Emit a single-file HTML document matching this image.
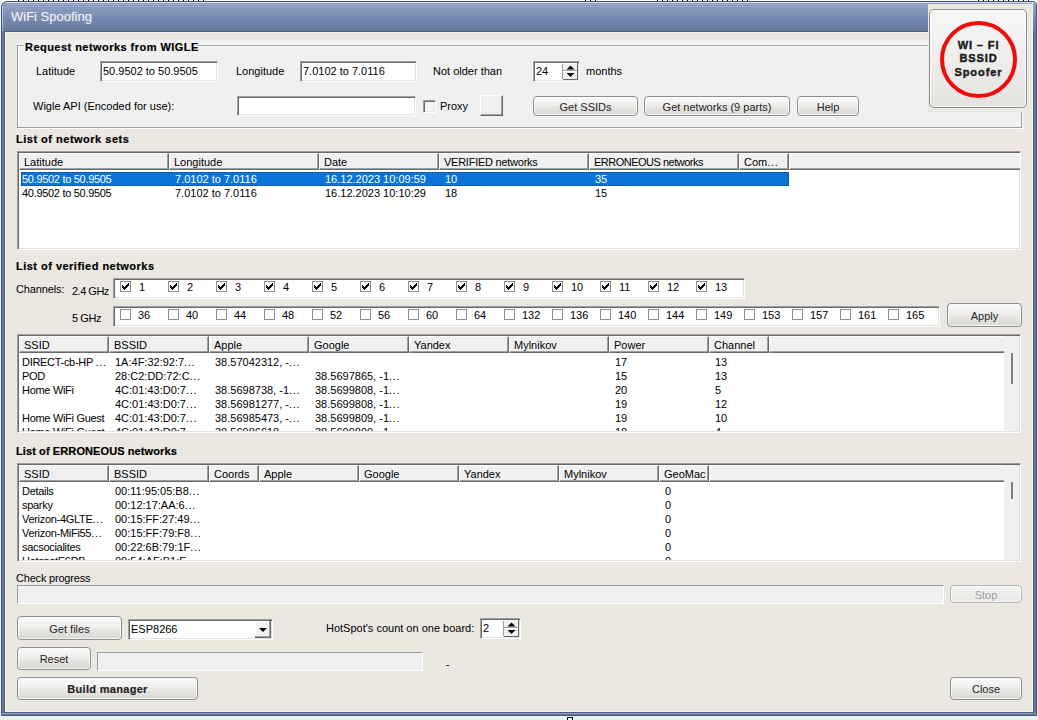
<!DOCTYPE html><html><head><meta charset="utf-8"><style>
*{box-sizing:border-box;margin:0;padding:0}
html,body{width:1038px;height:720px;overflow:hidden;background:#fff;font-family:"Liberation Sans",sans-serif;font-size:11px;color:#000}
.a{position:absolute}
.t{position:absolute;white-space:pre;line-height:13px;height:13px}
.b{font-weight:bold;-webkit-text-stroke:0.2px currentColor}
.edit{position:absolute;border-top:1px solid #a0a0a0;border-left:1px solid #a0a0a0;border-right:1px solid #fff;border-bottom:1px solid #fff;box-shadow:inset 1px 1px 0 #696969, inset -1px -1px 0 #e3e3e3}
.stat{position:absolute;background:#f0f0f0;border-top:1px solid #a0a0a0;border-left:1px solid #a0a0a0;border-right:1px solid #fff;border-bottom:1px solid #fff}
.btn{position:absolute;border:1px solid #8e8f8f;border-radius:4px;background:linear-gradient(#fafafa 0%,#f1f0ef 40%,#e6e5e2 60%,#d9d8d5 100%);box-shadow:inset 0 0 0 1px rgba(255,255,255,.7)}
.lv{position:absolute;background:#fff;border-top:1px solid #a0a0a0;border-left:1px solid #a0a0a0;border-right:1px solid #fff;border-bottom:1px solid #fff;box-shadow:inset 1px 1px 0 #696969, inset -1px -1px 0 #e3e3e3}
.hd{position:absolute;background:#f0f0f0;border-left:1px solid #fff;border-top:1px solid #fff;border-right:1px solid #696969;border-bottom:1px solid #696969;box-shadow:inset -1px -1px 0 #a0a0a0}
.cb{position:absolute;width:11px;height:11px;border:1px solid #8f8f8f;background:#fff}
.cb svg{position:absolute;left:1px;top:1px}
.selr{background:#0b74d9;outline:1px dotted #17467e;outline-offset:-1px}
.spinu,.spind{position:absolute;background:#f0f0f0}
.spinu{border-right:1px solid #a0a0a0;border-bottom:1px solid #a0a0a0}
.spind{border-top:1px solid #fff;border-right:1px solid #696969;border-bottom:1px solid #696969}
.spinu i,.spind i{position:absolute;left:4px;width:0;height:0;border-left:3.5px solid transparent;border-right:3.5px solid transparent}
.spinu i.up{top:3px;border-bottom:4px solid #000}
.spind i.dn{top:1px;border-top:4px solid #000}
.cbs{position:absolute;width:13px;height:13px;background:#f4f4f4;border-top:1px solid #a0a0a0;border-left:1px solid #a0a0a0;border-right:1px solid #fff;border-bottom:1px solid #fff;box-shadow:inset 1px 1px 0 #696969, inset -1px -1px 0 #e3e3e3}
.rbtn{position:absolute;background:#f0f0f0;border-top:1px solid #fff;border-left:1px solid #fff;border-right:1px solid #696969;border-bottom:1px solid #696969;box-shadow:inset -1px -1px 0 #a0a0a0}
</style></head><body>
<div class="a" style="left:0;top:0;width:1038px;height:720px;background:#fff"></div>
<div class="a" style="left:1037px;top:0;width:1px;height:720px;background:#dce6f2"></div>
<div class="a" style="left:0;top:0;width:1px;height:720px;background:#e8f2fc"></div>
<div class="a" style="left:0;top:716px;width:1038px;height:4px;background:#e6f3ef"></div>
<div class="a" style="left:18px;top:0;width:190px;height:1px;background:repeating-linear-gradient(90deg,#000 0 1px,transparent 1px 5px)"></div>
<div class="a" style="left:585px;top:0;width:14px;height:1px;background:repeating-linear-gradient(90deg,#000 0 1px,transparent 1px 5px)"></div>
<div class="a" style="left:657px;top:0;width:95px;height:1px;background:repeating-linear-gradient(90deg,#000 0 1px,transparent 1px 5px)"></div>
<div class="a" style="left:978px;top:0;width:55px;height:1px;background:repeating-linear-gradient(90deg,#000 0 1px,transparent 1px 5px)"></div>
<div class="a" style="left:1px;top:1px;width:1036px;height:715px;background:#66779a;border:1px solid #4a5570;border-radius:6px 4px 0 0"></div>
<div class="a" style="left:2px;top:2px;width:1034px;height:29px;border-radius:5px 3px 0 0;background:linear-gradient(#d0dcf0 0px,#d0dcf0 1px,#96a6c6 1px,#8597b9 9px,#7486ae 18px,#667aa0 28px)"></div>
<div class="a" style="left:2px;top:713px;width:1034px;height:1px;background:#8b9dc1"></div>
<div class="a" style="left:2px;top:6px;width:1px;height:25px;background:linear-gradient(#c8d4ec,#9aaccc)"></div>
<div class="a" style="left:4px;top:31px;width:1030px;height:682px;background:#4f5d7c"></div>
<div class="a" style="left:5px;top:32px;width:1028px;height:680px;background:#ebe8e2;border:1px solid #f4f4f4"></div>
<div class="t" style="left:11px;top:9px;font-size:13px;line-height:15px;height:15px;color:#f4f6fa;text-shadow:0 0 4px rgba(220,230,245,.35)">WiFi Spoofing</div>
<div class="a" style="left:17px;top:40px;width:1005px;height:88px;background:#f0f0f0"></div>
<div class="a" style="left:17px;top:44px;width:1005px;height:1px;background:#fafafa"></div>
<div class="a" style="left:17px;top:45px;width:1005px;height:83px;border:1px solid #a0a0a0;box-shadow:inset 1px 1px 0 #fff, 1px 1px 0 #fff"></div>
<div class="a" style="left:24px;top:40px;width:174px;height:12px;background:#f0f0f0"></div>
<div class="t b" style="left:25px;top:41px;letter-spacing:0.46px">Request networks from WIGLE</div>
<div class="t " style="left:36px;top:65px;">Latitude</div>
<div class="edit" style="left:100px;top:61px;width:118px;height:21px;background:#fff"></div>
<div class="t " style="left:103px;top:65px;">50.9502 to 50.9505</div>
<div class="t " style="left:236px;top:65px;">Longitude</div>
<div class="edit" style="left:300px;top:61px;width:117px;height:21px;background:#fff"></div>
<div class="t " style="left:303px;top:65px;">7.0102 to 7.0116</div>
<div class="t " style="left:433px;top:65px;">Not older than</div>
<div class="edit" style="left:533px;top:61px;width:47px;height:21px;background:#fff"></div>
<div class="t " style="left:536px;top:65px;">24</div>
<div class="a" style="left:562px;top:64px;width:1px;height:15px;background:#a0a0a0"></div>
<svg class="a" style="left:563px;top:63px" width="15" height="17" viewBox="0 0 15 17"><rect x="0" y="0" width="15" height="17" fill="#f0f0f0"/><rect x="0" y="0" width="14" height="1" fill="#fff"/><rect x="0" y="7" width="14" height="1" fill="#a0a0a0"/><rect x="0" y="8" width="14" height="1" fill="#fff"/><rect x="14" y="0" width="1" height="17" fill="#696969"/><rect x="0" y="16" width="15" height="1" fill="#696969"/><path d="M3.5 6.5 L11.5 6.5 L7.5 2.5 Z" fill="#000"/><path d="M3.5 10 L11.5 10 L7.5 14 Z" fill="#000"/></svg>
<div class="t " style="left:586px;top:65px;">months</div>
<div class="t " style="left:33px;top:100px;">Wigle API (Encoded for use):</div>
<div class="edit" style="left:237px;top:96px;width:179px;height:20px;background:#fff"></div>
<div class="cbs" style="left:423px;top:100px"></div>
<div class="t " style="left:440px;top:100px;">Proxy</div>
<div class="rbtn" style="left:480px;top:95px;width:23px;height:21px"></div>
<div class="btn" style="left:533px;top:96px;width:105px;height:20px;"></div>
<div class="t " style="left:533px;width:105px;text-align:center;top:101px;color:#262626;">Get SSIDs</div>
<div class="btn" style="left:644px;top:96px;width:146px;height:20px;"></div>
<div class="t " style="left:644px;width:146px;text-align:center;top:101px;color:#262626;">Get networks (9 parts)</div>
<div class="btn" style="left:797px;top:96px;width:62px;height:20px;"></div>
<div class="t " style="left:797px;width:62px;text-align:center;top:101px;color:#262626;">Help</div>
<div class="a" style="left:928px;top:4px;width:105px;height:108px;background:#ebe8e2"></div>
<div class="a" style="left:1032px;top:3px;width:1px;height:109px;background:#eef4f6"></div>
<div class="btn" style="left:929px;top:9px;width:98px;height:99px;border-radius:5px;background:linear-gradient(#f6f6f5,#efeeec 50%,#e4e3e0)"></div>
<div class="a" style="left:940px;top:21px;width:77px;height:77px;border-radius:50%;border:4.2px solid #f00c0c"></div>
<div class="t b" style="left:929px;top:39px;width:98px;text-align:center;letter-spacing:0.9px;word-spacing:0px;color:#1e1e1e;padding-left:1px;-webkit-text-stroke:0.45px #1e1e1e">WI &#8211; FI</div>
<div class="t b" style="left:929px;top:52px;width:98px;text-align:center;letter-spacing:0.9px;color:#1e1e1e;padding-left:1px;-webkit-text-stroke:0.45px #1e1e1e">BSSID</div>
<div class="t b" style="left:929px;top:66px;width:98px;text-align:center;letter-spacing:0.95px;color:#1e1e1e;padding-left:1px;-webkit-text-stroke:0.45px #1e1e1e">Spoofer</div>
<div class="t b" style="left:16px;top:133px;letter-spacing:0.5px">List of network sets</div>
<div class="lv" style="left:17px;top:151px;width:1004px;height:99px"></div>
<div class="hd" style="left:19px;top:153px;width:150px;height:17px"></div>
<div class="t " style="left:24px;top:156px;letter-spacing:0">Latitude</div>
<div class="hd" style="left:169px;top:153px;width:150px;height:17px"></div>
<div class="t " style="left:174px;top:156px;letter-spacing:0">Longitude</div>
<div class="hd" style="left:319px;top:153px;width:120px;height:17px"></div>
<div class="t " style="left:324px;top:156px;letter-spacing:0">Date</div>
<div class="hd" style="left:439px;top:153px;width:150px;height:17px"></div>
<div class="t " style="left:444px;top:156px;letter-spacing:-0.25px">VERIFIED networks</div>
<div class="hd" style="left:589px;top:153px;width:150px;height:17px"></div>
<div class="t " style="left:594px;top:156px;letter-spacing:-0.5px">ERRONEOUS networks</div>
<div class="hd" style="left:739px;top:153px;width:50px;height:17px"></div>
<div class="t " style="left:744px;top:156px;letter-spacing:0">Com<span style="letter-spacing:0.7px">...</span></div>
<div class="hd" style="left:789px;top:153px;width:231px;height:17px;border-right:0;box-shadow:inset 0 -1px 0 #a0a0a0"></div>
<div class="a" style="left:19px;top:172px;width:1001px;height:76px;overflow:hidden">
<div class="a selr" style="left:2px;top:0px;width:768px;height:14px"></div>
<div class="t" style="left:3px;top:1px;width:146px;overflow:hidden;color:#fff;letter-spacing:-0.3px">50.9502 to 50.9505</div>
<div class="t" style="left:156px;top:1px;width:143px;overflow:hidden;color:#fff;letter-spacing:0">7.0102 to 7.0116</div>
<div class="t" style="left:306px;top:1px;width:113px;overflow:hidden;color:#fff;letter-spacing:0">16.12.2023 10:09:59</div>
<div class="t" style="left:426px;top:1px;width:143px;overflow:hidden;color:#fff;letter-spacing:0">10</div>
<div class="t" style="left:576px;top:1px;width:143px;overflow:hidden;color:#fff;letter-spacing:0">35</div>
<div class="t" style="left:3px;top:15px;width:146px;overflow:hidden;color:#000;letter-spacing:-0.3px">40.9502 to 50.9505</div>
<div class="t" style="left:156px;top:15px;width:143px;overflow:hidden;color:#000;letter-spacing:0">7.0102 to 7.0116</div>
<div class="t" style="left:306px;top:15px;width:113px;overflow:hidden;color:#000;letter-spacing:0">16.12.2023 10:10:29</div>
<div class="t" style="left:426px;top:15px;width:143px;overflow:hidden;color:#000;letter-spacing:0">18</div>
<div class="t" style="left:576px;top:15px;width:143px;overflow:hidden;color:#000;letter-spacing:0">15</div>
</div>
<div class="t b" style="left:16px;top:260px;letter-spacing:0.48px">List of verified networks</div>
<div class="t " style="left:16px;top:283px;letter-spacing:-0.15px">Channels:</div>
<div class="t " style="left:72px;top:285px;letter-spacing:-0.5px">2.4 GHz</div>
<div class="t " style="left:72px;top:312px;letter-spacing:-0.4px">5 GHz</div>
<div class="edit" style="left:113px;top:278px;width:632px;height:21px;background:#fff"></div>
<div class="edit" style="left:113px;top:306px;width:827px;height:21px;background:#fff"></div>
<div class="cb" style="left:120px;top:281px"><svg width="7" height="7" viewBox="0 0 7 7" shape-rendering="crispEdges"><path d="M6 0h1v1h-1zM5 1h2v1h-2zM0 2h1v1h-1zM4 2h3v1h-3zM0 3h2v1h-2zM3 3h3v1h-3zM0 4h5v1h-5zM1 5h3v1h-3zM2 6h1v1h-1z" fill="#000"/></svg></div>
<div class="t " style="left:139px;top:281px;">1</div>
<div class="cb" style="left:168px;top:281px"><svg width="7" height="7" viewBox="0 0 7 7" shape-rendering="crispEdges"><path d="M6 0h1v1h-1zM5 1h2v1h-2zM0 2h1v1h-1zM4 2h3v1h-3zM0 3h2v1h-2zM3 3h3v1h-3zM0 4h5v1h-5zM1 5h3v1h-3zM2 6h1v1h-1z" fill="#000"/></svg></div>
<div class="t " style="left:187px;top:281px;">2</div>
<div class="cb" style="left:216px;top:281px"><svg width="7" height="7" viewBox="0 0 7 7" shape-rendering="crispEdges"><path d="M6 0h1v1h-1zM5 1h2v1h-2zM0 2h1v1h-1zM4 2h3v1h-3zM0 3h2v1h-2zM3 3h3v1h-3zM0 4h5v1h-5zM1 5h3v1h-3zM2 6h1v1h-1z" fill="#000"/></svg></div>
<div class="t " style="left:235px;top:281px;">3</div>
<div class="cb" style="left:264px;top:281px"><svg width="7" height="7" viewBox="0 0 7 7" shape-rendering="crispEdges"><path d="M6 0h1v1h-1zM5 1h2v1h-2zM0 2h1v1h-1zM4 2h3v1h-3zM0 3h2v1h-2zM3 3h3v1h-3zM0 4h5v1h-5zM1 5h3v1h-3zM2 6h1v1h-1z" fill="#000"/></svg></div>
<div class="t " style="left:283px;top:281px;">4</div>
<div class="cb" style="left:312px;top:281px"><svg width="7" height="7" viewBox="0 0 7 7" shape-rendering="crispEdges"><path d="M6 0h1v1h-1zM5 1h2v1h-2zM0 2h1v1h-1zM4 2h3v1h-3zM0 3h2v1h-2zM3 3h3v1h-3zM0 4h5v1h-5zM1 5h3v1h-3zM2 6h1v1h-1z" fill="#000"/></svg></div>
<div class="t " style="left:331px;top:281px;">5</div>
<div class="cb" style="left:360px;top:281px"><svg width="7" height="7" viewBox="0 0 7 7" shape-rendering="crispEdges"><path d="M6 0h1v1h-1zM5 1h2v1h-2zM0 2h1v1h-1zM4 2h3v1h-3zM0 3h2v1h-2zM3 3h3v1h-3zM0 4h5v1h-5zM1 5h3v1h-3zM2 6h1v1h-1z" fill="#000"/></svg></div>
<div class="t " style="left:379px;top:281px;">6</div>
<div class="cb" style="left:408px;top:281px"><svg width="7" height="7" viewBox="0 0 7 7" shape-rendering="crispEdges"><path d="M6 0h1v1h-1zM5 1h2v1h-2zM0 2h1v1h-1zM4 2h3v1h-3zM0 3h2v1h-2zM3 3h3v1h-3zM0 4h5v1h-5zM1 5h3v1h-3zM2 6h1v1h-1z" fill="#000"/></svg></div>
<div class="t " style="left:427px;top:281px;">7</div>
<div class="cb" style="left:456px;top:281px"><svg width="7" height="7" viewBox="0 0 7 7" shape-rendering="crispEdges"><path d="M6 0h1v1h-1zM5 1h2v1h-2zM0 2h1v1h-1zM4 2h3v1h-3zM0 3h2v1h-2zM3 3h3v1h-3zM0 4h5v1h-5zM1 5h3v1h-3zM2 6h1v1h-1z" fill="#000"/></svg></div>
<div class="t " style="left:475px;top:281px;">8</div>
<div class="cb" style="left:504px;top:281px"><svg width="7" height="7" viewBox="0 0 7 7" shape-rendering="crispEdges"><path d="M6 0h1v1h-1zM5 1h2v1h-2zM0 2h1v1h-1zM4 2h3v1h-3zM0 3h2v1h-2zM3 3h3v1h-3zM0 4h5v1h-5zM1 5h3v1h-3zM2 6h1v1h-1z" fill="#000"/></svg></div>
<div class="t " style="left:523px;top:281px;">9</div>
<div class="cb" style="left:552px;top:281px"><svg width="7" height="7" viewBox="0 0 7 7" shape-rendering="crispEdges"><path d="M6 0h1v1h-1zM5 1h2v1h-2zM0 2h1v1h-1zM4 2h3v1h-3zM0 3h2v1h-2zM3 3h3v1h-3zM0 4h5v1h-5zM1 5h3v1h-3zM2 6h1v1h-1z" fill="#000"/></svg></div>
<div class="t " style="left:571px;top:281px;">10</div>
<div class="cb" style="left:600px;top:281px"><svg width="7" height="7" viewBox="0 0 7 7" shape-rendering="crispEdges"><path d="M6 0h1v1h-1zM5 1h2v1h-2zM0 2h1v1h-1zM4 2h3v1h-3zM0 3h2v1h-2zM3 3h3v1h-3zM0 4h5v1h-5zM1 5h3v1h-3zM2 6h1v1h-1z" fill="#000"/></svg></div>
<div class="t " style="left:619px;top:281px;">11</div>
<div class="cb" style="left:648px;top:281px"><svg width="7" height="7" viewBox="0 0 7 7" shape-rendering="crispEdges"><path d="M6 0h1v1h-1zM5 1h2v1h-2zM0 2h1v1h-1zM4 2h3v1h-3zM0 3h2v1h-2zM3 3h3v1h-3zM0 4h5v1h-5zM1 5h3v1h-3zM2 6h1v1h-1z" fill="#000"/></svg></div>
<div class="t " style="left:667px;top:281px;">12</div>
<div class="cb" style="left:696px;top:281px"><svg width="7" height="7" viewBox="0 0 7 7" shape-rendering="crispEdges"><path d="M6 0h1v1h-1zM5 1h2v1h-2zM0 2h1v1h-1zM4 2h3v1h-3zM0 3h2v1h-2zM3 3h3v1h-3zM0 4h5v1h-5zM1 5h3v1h-3zM2 6h1v1h-1z" fill="#000"/></svg></div>
<div class="t " style="left:715px;top:281px;">13</div>
<div class="cb" style="left:120px;top:309px"></div>
<div class="t " style="left:138px;top:309px;">36</div>
<div class="cb" style="left:168px;top:309px"></div>
<div class="t " style="left:186px;top:309px;">40</div>
<div class="cb" style="left:216px;top:309px"></div>
<div class="t " style="left:234px;top:309px;">44</div>
<div class="cb" style="left:264px;top:309px"></div>
<div class="t " style="left:282px;top:309px;">48</div>
<div class="cb" style="left:312px;top:309px"></div>
<div class="t " style="left:330px;top:309px;">52</div>
<div class="cb" style="left:360px;top:309px"></div>
<div class="t " style="left:378px;top:309px;">56</div>
<div class="cb" style="left:408px;top:309px"></div>
<div class="t " style="left:426px;top:309px;">60</div>
<div class="cb" style="left:456px;top:309px"></div>
<div class="t " style="left:474px;top:309px;">64</div>
<div class="cb" style="left:504px;top:309px"></div>
<div class="t " style="left:522px;top:309px;">132</div>
<div class="cb" style="left:552px;top:309px"></div>
<div class="t " style="left:570px;top:309px;">136</div>
<div class="cb" style="left:600px;top:309px"></div>
<div class="t " style="left:618px;top:309px;">140</div>
<div class="cb" style="left:648px;top:309px"></div>
<div class="t " style="left:666px;top:309px;">144</div>
<div class="cb" style="left:696px;top:309px"></div>
<div class="t " style="left:714px;top:309px;">149</div>
<div class="cb" style="left:744px;top:309px"></div>
<div class="t " style="left:762px;top:309px;">153</div>
<div class="cb" style="left:792px;top:309px"></div>
<div class="t " style="left:810px;top:309px;">157</div>
<div class="cb" style="left:840px;top:309px"></div>
<div class="t " style="left:858px;top:309px;">161</div>
<div class="cb" style="left:888px;top:309px"></div>
<div class="t " style="left:906px;top:309px;">165</div>
<div class="btn" style="left:947px;top:303px;width:75px;height:24px;"></div>
<div class="t " style="left:947px;width:75px;text-align:center;top:310px;color:#262626;">Apply</div>
<div class="lv" style="left:17px;top:334px;width:1004px;height:99px"></div>
<div class="hd" style="left:19px;top:336px;width:90px;height:17px"></div>
<div class="t " style="left:24px;top:339px;letter-spacing:0">SSID</div>
<div class="hd" style="left:109px;top:336px;width:100px;height:17px"></div>
<div class="t " style="left:114px;top:339px;letter-spacing:0">BSSID</div>
<div class="hd" style="left:209px;top:336px;width:100px;height:17px"></div>
<div class="t " style="left:214px;top:339px;letter-spacing:0">Apple</div>
<div class="hd" style="left:309px;top:336px;width:100px;height:17px"></div>
<div class="t " style="left:314px;top:339px;letter-spacing:0">Google</div>
<div class="hd" style="left:409px;top:336px;width:100px;height:17px"></div>
<div class="t " style="left:414px;top:339px;letter-spacing:0">Yandex</div>
<div class="hd" style="left:509px;top:336px;width:100px;height:17px"></div>
<div class="t " style="left:514px;top:339px;letter-spacing:0">Mylnikov</div>
<div class="hd" style="left:609px;top:336px;width:100px;height:17px"></div>
<div class="t " style="left:614px;top:339px;letter-spacing:0">Power</div>
<div class="hd" style="left:709px;top:336px;width:60px;height:17px"></div>
<div class="t " style="left:714px;top:339px;letter-spacing:0">Channel</div>
<div class="hd" style="left:769px;top:336px;width:235px;height:17px;border-right:0;box-shadow:inset 0 -1px 0 #a0a0a0"></div>
<div class="a" style="left:1004px;top:336px;width:15px;height:95px;background:#f0f0f0"></div>
<div class="a" style="left:1011px;top:353px;width:2px;height:31px;background:#808080"></div>
<div class="a" style="left:19px;top:355px;width:985px;height:76px;overflow:hidden">
<div class="t" style="left:3px;top:1px;width:86px;overflow:hidden;color:#000;letter-spacing:-0.3px">DIRECT-cb-HP <span style="letter-spacing:0.7px">...</span></div>
<div class="t" style="left:96px;top:1px;width:93px;overflow:hidden;color:#000;letter-spacing:0">1A:4F:32:92:7<span style="letter-spacing:0.7px">...</span></div>
<div class="t" style="left:196px;top:1px;width:93px;overflow:hidden;color:#000;letter-spacing:0">38.57042312, -<span style="letter-spacing:0.7px">...</span></div>
<div class="t" style="left:596px;top:1px;width:93px;overflow:hidden;color:#000;letter-spacing:0">17</div>
<div class="t" style="left:696px;top:1px;width:53px;overflow:hidden;color:#000;letter-spacing:0">13</div>
<div class="t" style="left:3px;top:15px;width:86px;overflow:hidden;color:#000;letter-spacing:-0.3px">POD</div>
<div class="t" style="left:96px;top:15px;width:93px;overflow:hidden;color:#000;letter-spacing:0">28:C2:DD:72:C<span style="letter-spacing:0.7px">...</span></div>
<div class="t" style="left:296px;top:15px;width:93px;overflow:hidden;color:#000;letter-spacing:0">38.5697865, -1<span style="letter-spacing:0.7px">...</span></div>
<div class="t" style="left:596px;top:15px;width:93px;overflow:hidden;color:#000;letter-spacing:0">15</div>
<div class="t" style="left:696px;top:15px;width:53px;overflow:hidden;color:#000;letter-spacing:0">13</div>
<div class="t" style="left:3px;top:29px;width:86px;overflow:hidden;color:#000;letter-spacing:-0.3px">Home WiFi</div>
<div class="t" style="left:96px;top:29px;width:93px;overflow:hidden;color:#000;letter-spacing:0">4C:01:43:D0:7<span style="letter-spacing:0.7px">...</span></div>
<div class="t" style="left:196px;top:29px;width:93px;overflow:hidden;color:#000;letter-spacing:0">38.5698738, -1<span style="letter-spacing:0.7px">...</span></div>
<div class="t" style="left:296px;top:29px;width:93px;overflow:hidden;color:#000;letter-spacing:0">38.5699808, -1<span style="letter-spacing:0.7px">...</span></div>
<div class="t" style="left:596px;top:29px;width:93px;overflow:hidden;color:#000;letter-spacing:0">20</div>
<div class="t" style="left:696px;top:29px;width:53px;overflow:hidden;color:#000;letter-spacing:0">5</div>
<div class="t" style="left:96px;top:43px;width:93px;overflow:hidden;color:#000;letter-spacing:0">4C:01:43:D0:7<span style="letter-spacing:0.7px">...</span></div>
<div class="t" style="left:196px;top:43px;width:93px;overflow:hidden;color:#000;letter-spacing:0">38.56981277, -<span style="letter-spacing:0.7px">...</span></div>
<div class="t" style="left:296px;top:43px;width:93px;overflow:hidden;color:#000;letter-spacing:0">38.5699808, -1<span style="letter-spacing:0.7px">...</span></div>
<div class="t" style="left:596px;top:43px;width:93px;overflow:hidden;color:#000;letter-spacing:0">19</div>
<div class="t" style="left:696px;top:43px;width:53px;overflow:hidden;color:#000;letter-spacing:0">12</div>
<div class="t" style="left:3px;top:57px;width:86px;overflow:hidden;color:#000;letter-spacing:-0.3px">Home WiFi Guest</div>
<div class="t" style="left:96px;top:57px;width:93px;overflow:hidden;color:#000;letter-spacing:0">4C:01:43:D0:7<span style="letter-spacing:0.7px">...</span></div>
<div class="t" style="left:196px;top:57px;width:93px;overflow:hidden;color:#000;letter-spacing:0">38.56985473, -<span style="letter-spacing:0.7px">...</span></div>
<div class="t" style="left:296px;top:57px;width:93px;overflow:hidden;color:#000;letter-spacing:0">38.5699809, -1<span style="letter-spacing:0.7px">...</span></div>
<div class="t" style="left:596px;top:57px;width:93px;overflow:hidden;color:#000;letter-spacing:0">19</div>
<div class="t" style="left:696px;top:57px;width:53px;overflow:hidden;color:#000;letter-spacing:0">10</div>
<div class="t" style="left:3px;top:71px;width:86px;overflow:hidden;color:#000;letter-spacing:-0.3px">Home WiFi Guest</div>
<div class="t" style="left:96px;top:71px;width:93px;overflow:hidden;color:#000;letter-spacing:0">4C:01:43:D0:7<span style="letter-spacing:0.7px">...</span></div>
<div class="t" style="left:196px;top:71px;width:93px;overflow:hidden;color:#000;letter-spacing:0">38.56986618<span style="letter-spacing:0.7px">...</span></div>
<div class="t" style="left:296px;top:71px;width:93px;overflow:hidden;color:#000;letter-spacing:0">38.5699800, -1<span style="letter-spacing:0.7px">...</span></div>
<div class="t" style="left:596px;top:71px;width:93px;overflow:hidden;color:#000;letter-spacing:0">18</div>
<div class="t" style="left:696px;top:71px;width:53px;overflow:hidden;color:#000;letter-spacing:0">4</div>
</div>
<div class="t b" style="left:16px;top:445px;letter-spacing:0.1px">List of ERRONEOUS networks</div>
<div class="lv" style="left:17px;top:463px;width:1004px;height:99px"></div>
<div class="hd" style="left:19px;top:465px;width:90px;height:17px"></div>
<div class="t " style="left:24px;top:468px;letter-spacing:0">SSID</div>
<div class="hd" style="left:109px;top:465px;width:100px;height:17px"></div>
<div class="t " style="left:114px;top:468px;letter-spacing:0">BSSID</div>
<div class="hd" style="left:209px;top:465px;width:50px;height:17px"></div>
<div class="t " style="left:214px;top:468px;letter-spacing:0">Coords</div>
<div class="hd" style="left:259px;top:465px;width:100px;height:17px"></div>
<div class="t " style="left:264px;top:468px;letter-spacing:0">Apple</div>
<div class="hd" style="left:359px;top:465px;width:100px;height:17px"></div>
<div class="t " style="left:364px;top:468px;letter-spacing:0">Google</div>
<div class="hd" style="left:459px;top:465px;width:100px;height:17px"></div>
<div class="t " style="left:464px;top:468px;letter-spacing:0">Yandex</div>
<div class="hd" style="left:559px;top:465px;width:100px;height:17px"></div>
<div class="t " style="left:564px;top:468px;letter-spacing:0">Mylnikov</div>
<div class="hd" style="left:659px;top:465px;width:50px;height:17px"></div>
<div class="t " style="left:664px;top:468px;letter-spacing:0">GeoMac</div>
<div class="hd" style="left:709px;top:465px;width:295px;height:17px;border-right:0;box-shadow:inset 0 -1px 0 #a0a0a0"></div>
<div class="a" style="left:1004px;top:465px;width:15px;height:95px;background:#f0f0f0"></div>
<div class="a" style="left:1011px;top:482px;width:2px;height:17px;background:#808080"></div>
<div class="a" style="left:19px;top:484px;width:985px;height:76px;overflow:hidden">
<div class="t" style="left:3px;top:1px;width:86px;overflow:hidden;color:#000;letter-spacing:-0.3px">Details</div>
<div class="t" style="left:96px;top:1px;width:93px;overflow:hidden;color:#000;letter-spacing:0">00:11:95:05:B8<span style="letter-spacing:0.7px">...</span></div>
<div class="t" style="left:646px;top:1px;width:43px;overflow:hidden;color:#000;letter-spacing:0">0</div>
<div class="t" style="left:3px;top:15px;width:86px;overflow:hidden;color:#000;letter-spacing:-0.3px">sparky</div>
<div class="t" style="left:96px;top:15px;width:93px;overflow:hidden;color:#000;letter-spacing:0">00:12:17:AA:6<span style="letter-spacing:0.7px">...</span></div>
<div class="t" style="left:646px;top:15px;width:43px;overflow:hidden;color:#000;letter-spacing:0">0</div>
<div class="t" style="left:3px;top:29px;width:86px;overflow:hidden;color:#000;letter-spacing:-0.3px">Verizon-4GLTE<span style="letter-spacing:0.7px">...</span></div>
<div class="t" style="left:96px;top:29px;width:93px;overflow:hidden;color:#000;letter-spacing:0">00:15:FF:27:49<span style="letter-spacing:0.7px">...</span></div>
<div class="t" style="left:646px;top:29px;width:43px;overflow:hidden;color:#000;letter-spacing:0">0</div>
<div class="t" style="left:3px;top:43px;width:86px;overflow:hidden;color:#000;letter-spacing:-0.3px">Verizon-MiFi55<span style="letter-spacing:0.7px">...</span></div>
<div class="t" style="left:96px;top:43px;width:93px;overflow:hidden;color:#000;letter-spacing:0">00:15:FF:79:F8<span style="letter-spacing:0.7px">...</span></div>
<div class="t" style="left:646px;top:43px;width:43px;overflow:hidden;color:#000;letter-spacing:0">0</div>
<div class="t" style="left:3px;top:57px;width:86px;overflow:hidden;color:#000;letter-spacing:-0.3px">sacsocialites</div>
<div class="t" style="left:96px;top:57px;width:93px;overflow:hidden;color:#000;letter-spacing:0">00:22:6B:79:1F<span style="letter-spacing:0.7px">...</span></div>
<div class="t" style="left:646px;top:57px;width:43px;overflow:hidden;color:#000;letter-spacing:0">0</div>
<div class="t" style="left:3px;top:71px;width:86px;overflow:hidden;color:#000;letter-spacing:-0.3px">HotspotE6DB</div>
<div class="t" style="left:96px;top:71px;width:93px;overflow:hidden;color:#000;letter-spacing:0">00:54:AF:B1:E<span style="letter-spacing:0.7px">...</span></div>
<div class="t" style="left:646px;top:71px;width:43px;overflow:hidden;color:#000;letter-spacing:0">0</div>
</div>
<div class="t " style="left:16px;top:572px;letter-spacing:-0.2px">Check progress</div>
<div class="stat" style="left:17px;top:585px;width:927px;height:19px"></div>
<div class="btn" style="left:950px;top:585px;width:72px;height:18px;border-color:#b5b5b5;background:linear-gradient(#f4f4f3,#e9e8e6)"></div>
<div class="t" style="left:950px;width:72px;text-align:center;top:589px;color:#a0a0a0">Stop</div>
<div class="btn" style="left:17px;top:616px;width:105px;height:24px;"></div>
<div class="t " style="left:17px;width:105px;text-align:center;top:623px;color:#262626;">Get files</div>
<div class="edit" style="left:128px;top:619px;width:145px;height:21px;background:#fff"></div>
<div class="t " style="left:131px;top:623px;">ESP8266</div>
<svg class="a" style="left:255px;top:621px" width="16" height="17" viewBox="0 0 16 17"><rect x="0" y="0" width="16" height="17" fill="#f0f0f0"/><rect x="0" y="0" width="15" height="1" fill="#fff"/><rect x="0" y="0" width="1" height="16" fill="#fff"/><rect x="14" y="0" width="1" height="16" fill="#a0a0a0"/><rect x="0" y="15" width="15" height="1" fill="#a0a0a0"/><rect x="15" y="0" width="1" height="17" fill="#696969"/><rect x="0" y="16" width="16" height="1" fill="#696969"/><path d="M4 7 L12 7 L8 11 Z" fill="#000"/></svg>
<div class="t " style="left:326px;top:622px;">HotSpot's count on one board:</div>
<div class="edit" style="left:480px;top:618px;width:41px;height:21px;background:#fff"></div>
<div class="t " style="left:483px;top:622px;">2</div>
<div class="a" style="left:503px;top:621px;width:1px;height:15px;background:#a0a0a0"></div>
<svg class="a" style="left:504px;top:620px" width="15" height="17" viewBox="0 0 15 17"><rect x="0" y="0" width="15" height="17" fill="#f0f0f0"/><rect x="0" y="0" width="14" height="1" fill="#fff"/><rect x="0" y="7" width="14" height="1" fill="#a0a0a0"/><rect x="0" y="8" width="14" height="1" fill="#fff"/><rect x="14" y="0" width="1" height="17" fill="#696969"/><rect x="0" y="16" width="15" height="1" fill="#696969"/><path d="M3.5 6.5 L11.5 6.5 L7.5 2.5 Z" fill="#000"/><path d="M3.5 10 L11.5 10 L7.5 14 Z" fill="#000"/></svg>
<div class="btn" style="left:17px;top:647px;width:74px;height:23px;"></div>
<div class="t " style="left:17px;width:74px;text-align:center;top:653px;color:#262626;">Reset</div>
<div class="stat" style="left:97px;top:652px;width:326px;height:19px"></div>
<div class="t " style="left:446px;top:658px;">-</div>
<div class="btn" style="left:17px;top:677px;width:181px;height:23px;"></div>
<div class="t b" style="left:17px;width:181px;text-align:center;top:683px;color:#262626;letter-spacing:0.3px">Build manager</div>
<div class="btn" style="left:950px;top:677px;width:72px;height:23px;"></div>
<div class="t " style="left:950px;width:72px;text-align:center;top:683px;color:#262626;">Close</div>
<div class="a" style="left:567px;top:717px;width:6px;height:4px;border:1px solid #000;border-bottom:0;background:#fff"></div>
</body></html>
